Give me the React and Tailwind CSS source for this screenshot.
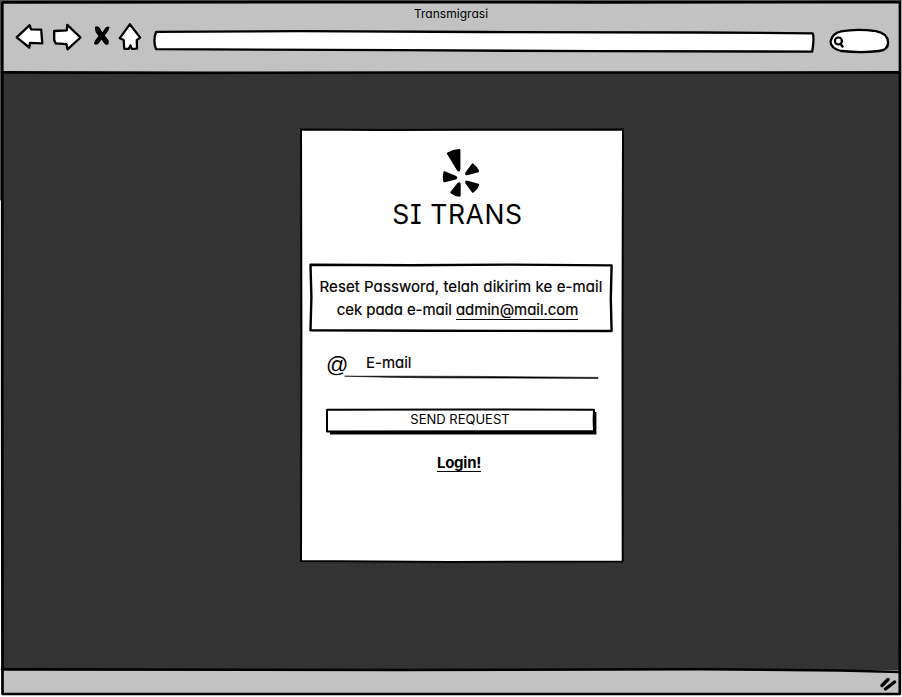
const ink = {
  fill: "none",
  stroke: "#000",
  strokeLinejoin: "round",
  strokeLinecap: "round",
};

function Outline({ w, h, children }) {
  return (
    <svg
      className="pointer-events-none absolute inset-0 overflow-visible"
      width={w}
      height={h}
      viewBox={`0 0 ${w} ${h}`}
      {...ink}
    >
      {children}
    </svg>
  );
}

function Toolbar() {
  return (
    <div className="flex h-[58px] items-start">
      <svg className="ml-[13px] mt-2 shrink-0" width="30" height="29" viewBox="15 22 30 29" {...ink} fill="#fff" strokeWidth="2.3">
        <path d="M16.7 37.3 29.6 25.2 31 29.4 41.2 29.6 42.3 43.3 30 42.8 29.3 47.5Z" />
      </svg>
      <svg className="ml-[6px] mt-2 shrink-0" width="32" height="29" viewBox="51 22 32 29" {...ink} fill="#fff" strokeWidth="2.3">
        <path d="M54.2 31 66.8 30.3 67.3 24.8 80.5 37.5 67.5 49.3 66.5 44.2 55.6 43.3 54.2 40Z" />
      </svg>
      <svg className="ml-[10px] mt-2 shrink-0" width="18" height="29" viewBox="93 22 18 29" {...ink}>
        <path d="M95 26.8Q98 25 100 28.3L102.4 32.5 105.2 28Q107 25.4 109.6 27 108.8 31.5 104.9 35.6L108.6 40.4Q109.4 44.4 106.8 45Q103.5 44 101.7 39.6L99.4 42.4Q96.5 46 94 43.8 94 41 98.6 36 94.3 32 95 26.8Z" fill="#000" stroke="none" />
      </svg>
      <svg className="ml-[7px] mt-2 shrink-0" width="24" height="30" viewBox="118 22 24 30" {...ink} fill="#fff" strokeWidth="2.3">
        <path d="M129.8 24.3 140.2 37.6 136.8 40.2 137 48.6 131.8 48.8 130.5 45.4 128.8 48.8 124.2 48.8 123.7 40 119.8 38.2Z" />
      </svg>
      <svg className="ml-[11px] mt-4 shrink-0" width="663" height="24" viewBox="153 30 663 24" {...ink} fill="#fff" strokeWidth="2.3">
        <path d="M156 31.9 300 31.2 480 32 700 32.5 812.5 33.3Q814.6 36 812.2 51.6L600 51.2 400 50.2 156 49.2Q152.8 41 156 31.9Z" />
      </svg>
      <svg className="ml-[12px] mt-3 shrink-0" width="62" height="28" viewBox="828 26 62 28" {...ink} fill="#fff" strokeWidth="2.3">
        <path d="M841 31.4Q857 28.4 876 31.2 887.6 33.5 888 42 888.6 50 879 51 862 53.2 841 51 830.4 48 830.6 41.5 832 33.5 841 31.4Z" />
        <circle cx="838.4" cy="41" r="3.5" strokeWidth="2.2" />
        <path d="M840.5 44 842.5 46.5" strokeWidth="2.4" />
      </svg>
    </div>
  );
}

function Logo() {
  return (
    <svg width="40" height="50" viewBox="441 148 40 50" fill="#000" stroke="#000" strokeLinejoin="round" strokeWidth="2.2">
      <path d="M448 153.5Q453 150.3 459.3 150V169.5Q459 171 458 169.8Z" />
      <path d="M444.4 172.3 455.8 177Q456.8 177.8 455.6 178.4L444.4 181.2Q443.4 177 444.4 172.3Z" />
      <path d="M472.8 164.5Q476.6 167.5 478 171.2L467 174.2Q465.8 174.4 466.2 173.2Z" />
      <path d="M466.4 181.5 478.1 184.8Q476.8 189 472.8 191.7L466.2 182.6Z" />
      <path d="M459.6 184V195.6Q455 195.4 451.4 192.4L458.4 183.8Q459.4 182.8 459.6 184Z" />
    </svg>
  );
}

export default function App() {
  return (
    <div className="relative flex h-[697px] w-[902px] flex-col overflow-hidden bg-white font-['Inter',sans-serif] text-black [font-feature-settings:'cv11']">
      <header className="ml-[2px] h-[72px] w-[898px] bg-[#c2c2c2]">
        <div className="h-[14px] pt-[6px] text-center text-[12px] leading-[16px] tracking-[0.03px]">Transmigrasi</div>
        <Toolbar />
      </header>

      <main className="ml-[2px] flex h-[598px] w-[898px] justify-center bg-[#333333] pt-[57px]">
        <section className="relative ml-[22px] flex h-[433px] w-[322px] flex-col items-center bg-white">
          <Outline w={322} h={433}>
            <path d="M0 .5 80 1 170 .7 322 .5 321.5 200 321.7 432.5 150 433 0 432 .4 200Z" strokeWidth="2" />
          </Outline>
          <div className="-ml-[2px] mt-[19px] h-[50px]"><Logo /></div>
          <h1 className="-ml-[9px] mt-px whitespace-nowrap text-[26.5px] leading-[30px] tracking-[0.6px] [font-feature-settings:'cv11','cv08']">SI TRANS</h1>
          <div className="relative -ml-[2px] mt-[35px] h-[67px] w-[302px] whitespace-nowrap pt-[11px] text-center text-[15px] leading-[23px]">
            <Outline w={302} h={67}>
              <path d="M.5 .8 100 1.3 200 .6 301.6 1.4 300.8 35 301.6 67 120 66.8 .5 66.2 1.4 33Z" strokeWidth="2.4" />
            </Outline>
            <p className="tracking-[0.08px] [-webkit-text-stroke:0.2px_#000]">Reset Password, telah dikirim ke e-mail</p>
            <p className="-ml-[7px] tracking-[-0.06px] [-webkit-text-stroke:0.2px_#000]">cek pada e-mail <a className="border-b border-black">admin@mail.com</a></p>
          </div>
          <div className="relative mt-[18px] flex h-[30px] w-[272px] items-start">
            <span className="mt-[3px] w-[40px] font-['Liberation_Sans'] text-[22px] leading-[26px]">@</span>
            <span className="mt-px text-[15px] leading-[26px] [-webkit-text-stroke:0.2px_#000]">E-mail</span>
            <Outline w={272} h={30}>
              <path d="M19 27.2 80 27.2 150 27.4 272 28.4 272 29.4 100 28.8 60 28.2Z" fill="#000" stroke="#000" strokeWidth=".6" />
            </Outline>
          </div>
          <button className="relative -ml-[2px] mt-[29px] flex h-[26px] w-[270px] justify-center text-[13px] leading-[23px]">
            <Outline w={270} h={26}>
              <path d="M5 4H270.4V26.4H4Z" fill="#000" stroke="none" />
              <path d="M1 1.8 140 1.5 268 1.8 267.6 12 268 23 1 23.5Z" fill="#fff" strokeWidth="2" />
            </Outline>
            <span className="relative -left-px">SEND REQUEST</span>
          </button>
          <a className="-ml-[6px] mt-[20px] h-[18px] border-b border-black text-[15px] font-bold leading-[17px] tracking-[-0.25px]">Login!</a>
        </section>
      </main>

      <footer className="ml-[2px] flex h-[24px] w-[898px] justify-end bg-[#c2c2c2]">
        <svg className="mr-[3px] mt-[7px]" width="17" height="16" viewBox="880 677 17 16" {...ink} strokeWidth="3.4">
          <path d="M882 685.5 888 679.5M885.5 689 894.5 682" />
        </svg>
      </footer>

      <Outline w={902} h={697}>
        <path d="M0 .5H902M.5 0V200" stroke="#555" strokeWidth="1" />
        <path d="M2.3 2.3 300 2.1 600 2.3 900 2.2 900 300 899.8 694 450 694 2.5 694 2.2 400Z" strokeWidth="2.7" />
        <path d="M2 72.4 200 72.9 420 72.5 900 72.4M2 669.4 400 670 700 669.2 840 670.5 900 672" strokeWidth="2.6" />
      </Outline>
    </div>
  );
}
